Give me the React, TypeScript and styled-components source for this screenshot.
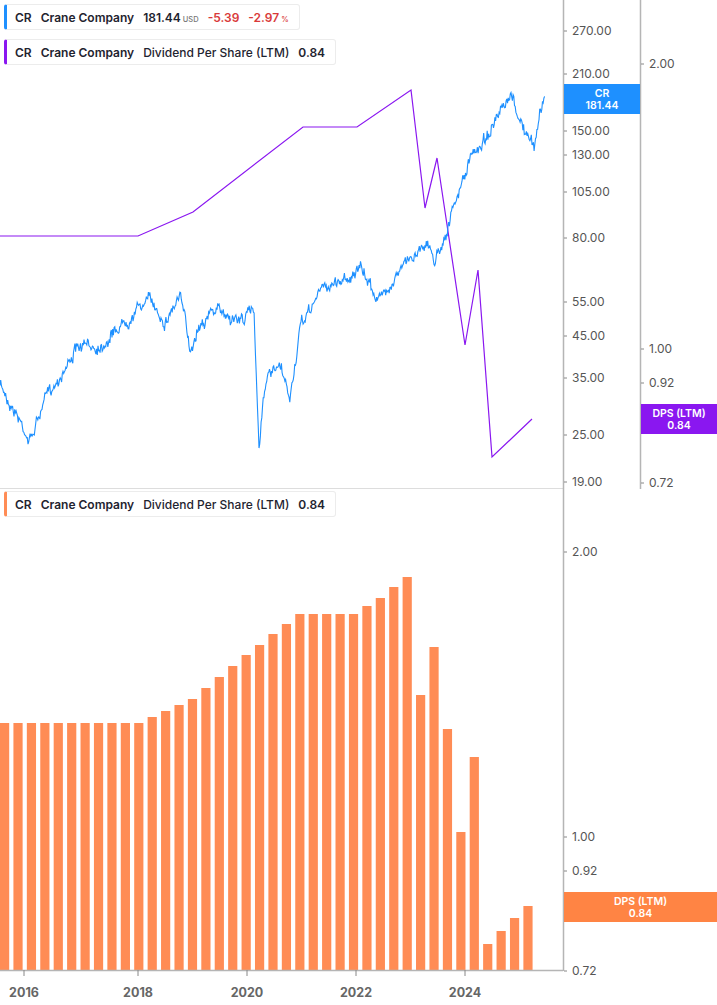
import React from "react";
import styled, { createGlobalStyle } from "styled-components";

const Global = createGlobalStyle`
  body { margin: 0; background: #fff; font-family: Inter, "Liberation Sans", sans-serif; }
`;

const Page = styled.div`
  width: 717px;
  height: 1005px;
  display: flex;
  flex-direction: column;
  overflow: hidden;
`;

const Pane = styled.div<{ $h: number }>`
  position: relative;
  height: ${(p) => p.$h}px;
  flex: none;
`;

const Chart = styled.svg`
  display: block;
  position: absolute;
  inset: 0;
`;

const Legends = styled.div<{ $top: number }>`
  position: absolute;
  left: 4px;
  top: ${(p) => p.$top}px;
  display: flex;
  flex-direction: column;
  align-items: flex-start;
  gap: 9px;
`;

const Legend = styled.div<{ $c: string }>`
  display: flex;
  align-items: center;
  gap: 9px;
  height: 26px;
  padding: 0 10px 0 8px;
  background: rgba(255, 255, 255, 0.92);
  border: 1px solid #ececec;
  border-left: 3px solid ${(p) => p.$c};
  border-radius: 3px;
  box-sizing: border-box;
  font-size: 12px;
  font-weight: 600;
  color: #1f2430;
`;

const Muted = styled.span`
  font-weight: 500;
`;

const Small = styled.span<{ $c?: string }>`
  font-size: 7.5px;
  font-weight: 500;
  color: ${(p) => p.$c || "#777"};
  margin-left: 2px;
`;

const Red = styled.span`
  color: #d93a3a;
`;

const F = "Inter, 'Liberation Sans', sans-serif";

function rnd(seed: number) {
  let s = seed;
  return () => {
    s = (s * 16807) % 2147483647;
    return s / 2147483647;
  };
}

const pricePts: [number, number][] = [
  [0, 385], [15, 410], [30, 440], [45, 400], [75, 350], [100, 345], [140, 305], [150, 300],
  [165, 320], [180, 295], [190, 350], [200, 320], [215, 310], [240, 320], [254, 310],
  [259, 445], [265, 380], [280, 370], [290, 400], [300, 330], [320, 290], [340, 280],
  [360, 270], [380, 300], [395, 275], [410, 260], [425, 240], [435, 260], [450, 220],
  [460, 190], [470, 160], [490, 130], [512, 100], [522, 125], [534, 150], [540, 110], [545, 95],
];

function pricePath() {
  const r = rnd(7);
  let d = "";
  let walk = 0;
  for (let x = 0; x <= 545; x += 0.7) {
    let i = 0;
    while (i < pricePts.length - 2 && pricePts[i + 1][0] < x) i++;
    const [x0, y0] = pricePts[i];
    const [x1, y1] = pricePts[i + 1];
    const t = Math.min(1, Math.max(0, (x - x0) / (x1 - x0)));
    walk = walk * 0.85 + (r() - 0.5) * 6;
    const y = y0 + (y1 - y0) * t + walk + (r() - 0.5) * 8;
    d += (d ? "L" : "M") + x.toFixed(1) + "," + y.toFixed(1);
  }
  return d;
}

const dps = "M0,236 L138,236 L193,212 L303,127 L357,127 L411,90 L425,208 L437,158 L465,345 L478,270 L492,457 L532,419";

const bars = [
  723, 723, 723, 723, 723, 723, 723, 723, 723, 723, 723, 717, 711, 705, 699, 688, 677, 666, 655, 645,
  634, 624, 614, 614, 614, 614, 614, 606, 598, 587, 577, 695, 647, 729, 832, 757, 944, 931, 918, 906,
];

const Tick = ({ x, y, label }: { x: number; y: number; label: string }) => (
  <g>
    <line x1={x} x2={x + 3} y1={y} y2={y} stroke="#888" />
    <text x={x + 8} y={y + 4} fontSize="12" fill="#555" fontFamily={F}>{label}</text>
  </g>
);

const Tag = ({ x, y, w, c, a, b }: { x: number; y: number; w: number; c: string; a: string; b: string }) => (
  <g>
    <rect x={x} y={y} width={w} height={30} fill={c} />
    <text x={x + w / 2} y={y + 13} fontSize="10.5" fontWeight="600" fill="#fff" textAnchor="middle" fontFamily={F}>{a}</text>
    <text x={x + w / 2} y={y + 25} fontSize="10.5" fontWeight="600" fill="#fff" textAnchor="middle" fontFamily={F}>{b}</text>
  </g>
);

export default function App() {
  const top: [string, number][] = [
    ["270.00", 31], ["210.00", 74], ["150.00", 131], ["130.00", 155], ["105.00", 192],
    ["80.00", 238], ["55.00", 302], ["45.00", 336], ["35.00", 378], ["25.00", 435], ["19.00", 482],
  ];
  const dpsT: [string, number][] = [["2.00", 64], ["1.00", 349], ["0.92", 383], ["0.82", 425], ["0.72", 483]];
  const botT: [string, number][] = [["2.00", 552], ["1.00", 837], ["0.92", 871], ["0.82", 917], ["0.72", 971]];
  const years: [string, number][] = [["2016", 24], ["2018", 138], ["2020", 247], ["2022", 356], ["2024", 465]];
  return (
    <Page>
      <Global />
      <Pane $h={489}>
        <Chart width={717} height={489}>
          <line x1={0} x2={563} y1={488.5} y2={488.5} stroke="#ddd" />
          <path d={dps} fill="none" stroke="#8a17f0" strokeWidth={1.2} />
          <path d={pricePath()} fill="none" stroke="#1e90ff" strokeWidth={1.1} />
          <line x1={563.5} x2={563.5} y1={0} y2={489} stroke="#b5b5b5" strokeWidth={1.5} />
          <line x1={640.5} x2={640.5} y1={0} y2={489} stroke="#b5b5b5" strokeWidth={1.5} />
          {top.map(([l, y]) => <Tick key={l} x={564} y={y} label={l} />)}
          {dpsT.map(([l, y]) => <Tick key={l} x={641} y={y} label={l} />)}
          <Tag x={564} y={84} w={76} c="#1e90ff" a="CR" b="181.44" />
          <Tag x={641} y={404} w={76} c="#8a17f0" a="DPS (LTM)" b="0.84" />
        </Chart>
        <Legends $top={4}>
          <Legend $c="#1e90ff">
            <span>CR</span><span>Crane Company</span>
            <span>181.44<Small>USD</Small></span>
            <Red>-5.39</Red><Red>-2.97<Small $c="#d93a3a">%</Small></Red>
          </Legend>
          <Legend $c="#8a17f0">
            <span>CR</span><span>Crane Company</span><Muted>Dividend Per Share (LTM)</Muted><span>0.84</span>
          </Legend>
        </Legends>
      </Pane>
      <Pane $h={516}>
        <Chart width={717} height={516} viewBox="0 489 717 516">
          {bars.map((y, i) => (
            <rect key={i} x={i * 13.42} y={y} width={9.2} height={970 - y} fill="#ff8c55" />
          ))}
          <line x1={0} x2={563} y1={970.5} y2={970.5} stroke="#b5b5b5" strokeWidth={1.5} />
          <line x1={563.5} x2={563.5} y1={489} y2={971} stroke="#b5b5b5" strokeWidth={1.5} />
          {botT.map(([l, y]) => <Tick key={l} x={564} y={y} label={l} />)}
          {years.map(([l, x]) => (
            <g key={l}>
              <line x1={x} x2={x} y1={970} y2={976} stroke="#888" />
              <text x={x} y={997} fontSize="12.5" fontWeight="700" fill="#666" textAnchor="middle" fontFamily={F}>{l}</text>
            </g>
          ))}
          <Tag x={564} y={892} w={153} c="#ff8444" a="DPS (LTM)" b="0.84" />
        </Chart>
        <Legends $top={2}>
          <Legend $c="#ff8c55">
            <span>CR</span><span>Crane Company</span><Muted>Dividend Per Share (LTM)</Muted><span>0.84</span>
          </Legend>
        </Legends>
      </Pane>
    </Page>
  );
}
